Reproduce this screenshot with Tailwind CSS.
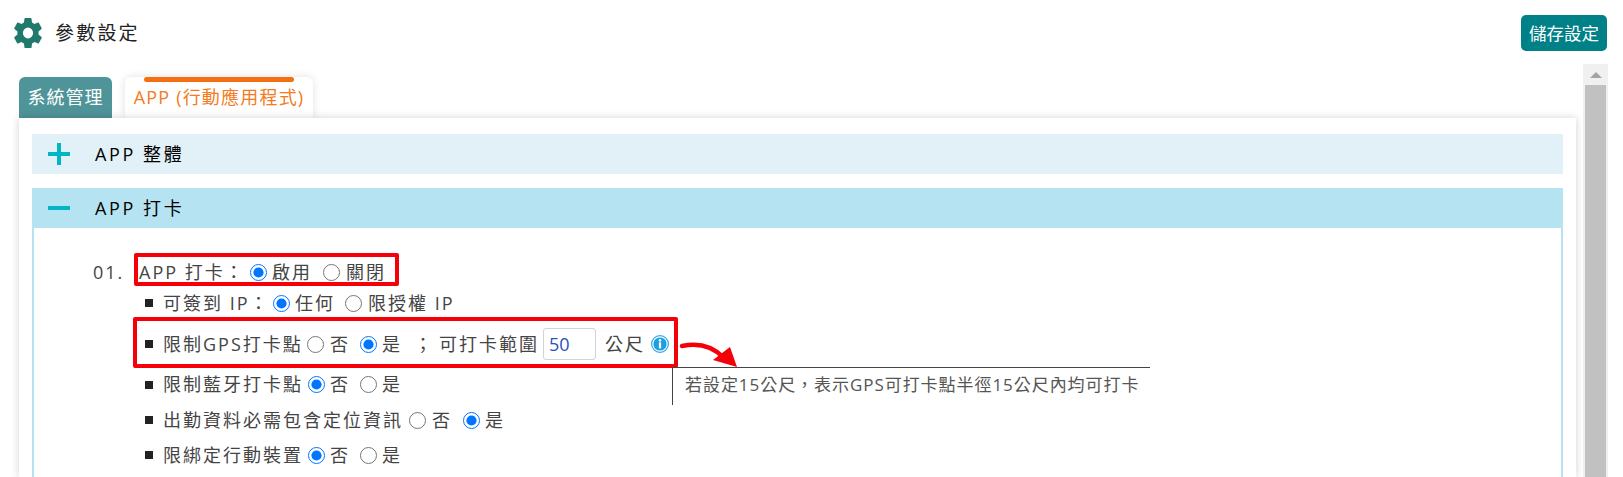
<!DOCTYPE html>
<html lang="zh-Hant">
<head>
  <meta charset="UTF-8">
  <script src="https://cdn.jsdelivr.net/npm/@tailwindcss/browser@4"></script>
  <title>參數設定</title>
</head>
<body class="relative h-[477px] w-[1623px] overflow-hidden bg-white font-['Open_Sans','Noto_Sans_CJK_TC',sans-serif] text-[#333]">

  <header class="flex h-[64px] items-start justify-between pr-[16px] pl-[11px]">
    <div class="flex items-center pt-[15px]">
      <svg class="h-[36px] w-[34px] text-[#1f7a6c]" viewBox="0 0 24 24" preserveAspectRatio="none" fill="currentColor"><path d="M19.4 13c.04-.32.07-.66.07-1s-.03-.68-.07-1l2.1-1.65c.2-.15.25-.42.12-.65l-2-3.46c-.12-.22-.39-.3-.61-.22l-2.49 1c-.52-.4-1.08-.73-1.69-.98l-.38-2.65A.49.49 0 0 0 14 2h-4c-.25 0-.46.18-.49.42l-.38 2.65c-.61.25-1.17.59-1.69.98l-2.49-1c-.23-.09-.49 0-.61.22l-2 3.46c-.13.22-.07.49.12.64L4.57 11c-.04.32-.07.66-.07 1s.03.68.07 1l-2.11 1.65c-.19.15-.24.42-.12.64l2 3.46c.12.22.39.3.61.22l2.49-1c.52.4 1.08.73 1.69.98l.38 2.65c.03.24.24.42.49.42h4c.25 0 .46-.18.49-.42l.38-2.65c.61-.25 1.17-.59 1.69-.98l2.49 1c.23.09.49 0 .61-.22l2-3.46c.12-.22.07-.49-.12-.64L19.4 13zM12 15.6a3.6 3.6 0 1 1 0-7.2 3.6 3.6 0 0 1 0 7.2z"/></svg>
      <h1 class="ml-[10px] text-[19px] tracking-[2.2px] text-[#222]">參數設定</h1>
    </div>
    <button class="mt-[15px] h-[36px] w-[86px] rounded-[5px] bg-[#008087] text-[17.5px] text-white">儲存設定</button>
  </header>

  <div class="flex pr-[15px] pl-[19px]">
    <main class="mr-[7px] w-[1557px]">
      <nav class="mt-[13px] flex h-[41px] items-end gap-[13px]">
        <a class="flex h-[41px] w-[93px] items-center justify-center rounded-t-[6px] bg-[#4f9499] text-[18px] tracking-[1px] text-white">系統管理</a>
        <a class="relative z-10 flex h-[41px] w-[188px] items-center justify-center rounded-t-[6px] bg-white text-[18px] tracking-[1.2px] text-[#f47b20] shadow-[0_0_8px_rgba(0,0,0,0.12)]">
          <span class="absolute top-0 left-[19px] h-[5px] w-[150px] rounded-[3px] bg-[#f36f12]"></span>APP (行動應用程式)
        </a>
      </nav>
      <section class="relative z-20 h-[359px] bg-white px-[13px] pt-[16px] shadow-[0_0_8px_rgba(0,0,0,0.18)]">
        <div class="flex h-[40px] items-center bg-[#e2f1f7]">
          <svg class="ml-[16px] h-[22px] w-[22px] text-[#00b5c4]" viewBox="0 0 22 22" fill="currentColor"><rect x="0" y="9" width="22" height="4"/><rect x="9" y="0" width="4" height="22"/></svg>
          <span class="ml-[25px] text-[18px] tracking-[2.6px] text-[#000]">APP 整體</span>
        </div>
        <div class="mt-[14px] flex h-[40px] items-center bg-[#b5e3f1]">
          <svg class="ml-[16px] h-[22px] w-[22px] text-[#00b5c4]" viewBox="0 0 22 22" fill="currentColor"><rect x="0" y="9" width="22" height="4"/></svg>
          <span class="ml-[25px] text-[18px] tracking-[2.6px] text-[#000]">APP 打卡</span>
        </div>
        <div class="h-[249px] border-x-2 border-[#b5e3f1] pt-[26px] pl-[59px] text-[18px] tracking-[2px] text-[#444]">
          <div class="flex h-[36px] items-center">
            <span class="w-[46px]">01.</span>
            <span class="w-[111px] whitespace-nowrap">APP 打卡：</span>
            <input type="radio" name="r1" checked class="m-0 h-[17px] w-[17px]">
            <span class="ml-[5px] w-[51px]">啟用</span>
            <input type="radio" name="r1" class="m-0 h-[17px] w-[17px]">
            <span class="ml-[6px]">關閉</span>
          </div>
          <div class="flex h-[26px] items-center pl-[52px]">
            <span class="mr-[10px] h-[8px] w-[8px] bg-[#222]"></span>
            <span class="w-[110px] whitespace-nowrap">可簽到 IP：</span>
            <input type="radio" name="r2" checked class="m-0 h-[17px] w-[17px]">
            <span class="ml-[5px] w-[50px]">任何</span>
            <input type="radio" name="r2" class="m-0 h-[17px] w-[17px]">
            <span class="ml-[6px] whitespace-nowrap">限授權 IP</span>
          </div>
          <div class="mt-[8px] flex h-[40px] items-center pl-[52px]">
            <span class="mr-[10px] h-[8px] w-[8px] bg-[#222]"></span>
            <span class="w-[144px] whitespace-nowrap">限制GPS打卡點</span>
            <input type="radio" name="r3" class="m-0 h-[17px] w-[17px]">
            <span class="ml-[6px] w-[30px]">否</span>
            <input type="radio" name="r3" checked class="m-0 h-[17px] w-[17px]">
            <span class="ml-[5px] w-[32px]">是</span>
            <span class="w-[129px] whitespace-nowrap">；<span class="ml-[5px]">可打卡範圍</span></span>
            <input type="text" value="50" class="h-[32px] w-[53px] rounded-[3px] border border-[#ced4da] px-[5px] text-[18px] tracking-normal text-[#2a4fc0]">
            <span class="ml-[9px] w-[46px]">公尺</span>
            <svg class="h-[18px] w-[18px]" viewBox="0 0 18 18"><circle cx="9" cy="9" r="8.4" fill="#fff" stroke="#29abe2" stroke-width="1.2"/><circle cx="9" cy="9" r="6.6" fill="#1c9fe0"/><circle cx="9" cy="5.4" r="1.3" fill="#fff"/><rect x="7.9" y="7.4" width="2.2" height="6" fill="#fff"/></svg>
          </div>
          <div class="mt-[2px] flex h-[37px] items-center pl-[52px]">
            <span class="mr-[10px] h-[8px] w-[8px] bg-[#222]"></span>
            <span class="w-[145px] whitespace-nowrap">限制藍牙打卡點</span>
            <input type="radio" name="r4" checked class="m-0 h-[17px] w-[17px]">
            <span class="ml-[5px] w-[30px]">否</span>
            <input type="radio" name="r4" class="m-0 h-[17px] w-[17px]">
            <span class="ml-[5px]">是</span>
          </div>
          <div class="flex h-[34px] items-center pl-[52px]">
            <span class="mr-[10px] h-[8px] w-[8px] bg-[#222]"></span>
            <span class="w-[246px] whitespace-nowrap">出勤資料必需包含定位資訊</span>
            <input type="radio" name="r5" class="m-0 h-[17px] w-[17px]">
            <span class="ml-[6px] w-[31px]">否</span>
            <input type="radio" name="r5" checked class="m-0 h-[17px] w-[17px]">
            <span class="ml-[5px]">是</span>
          </div>
          <div class="flex h-[36px] items-center pl-[52px]">
            <span class="mr-[10px] h-[8px] w-[8px] bg-[#222]"></span>
            <span class="w-[145px] whitespace-nowrap">限綁定行動裝置</span>
            <input type="radio" name="r6" checked class="m-0 h-[17px] w-[17px]">
            <span class="ml-[5px] w-[30px]">否</span>
            <input type="radio" name="r6" class="m-0 h-[17px] w-[17px]">
            <span class="ml-[5px]">是</span>
          </div>
        </div>
      </section>
    </main>
    <aside class="flex h-[413px] w-[25px] flex-col items-center bg-[#f0f0f0]">
      <span class="mt-[8px] mb-[7px] h-0 w-0 border-x-[6px] border-b-[6px] border-x-transparent border-b-[#a3a3a3]"></span>
      <span class="w-[21px] flex-1 bg-[#c1c1c1]"></span>
    </aside>
  </div>

  <!-- annotations drawn over the form -->
  <div class="absolute top-[253px] left-[134px] z-30 h-[33px] w-[265px] rounded-[2px] border-[4px] border-[#f50008]"></div>
  <div class="absolute top-[317px] left-[133px] z-30 h-[51px] w-[545px] rounded-[2px] border-[4px] border-[#f50008]"></div>
  <svg class="absolute top-[335px] left-[678px] z-30 h-[36px] w-[64px]" viewBox="0 0 64 36" fill="none">
    <path d="M4 11 C22 7 35 12 45 22" stroke="#f50008" stroke-width="4.5" stroke-linecap="round"/>
    <polygon points="59,32 35,25 52,12" fill="#f50008"/>
  </svg>
  <div class="absolute top-[367px] left-[672px] z-30 h-[38px] w-[478px] border-t border-l border-[#444] pt-[4px] pl-[12px] text-[17px] tracking-[0.95px] whitespace-nowrap text-[#555]">若設定15公尺，表示GPS可打卡點半徑15公尺內均可打卡</div>
</body>
</html>
